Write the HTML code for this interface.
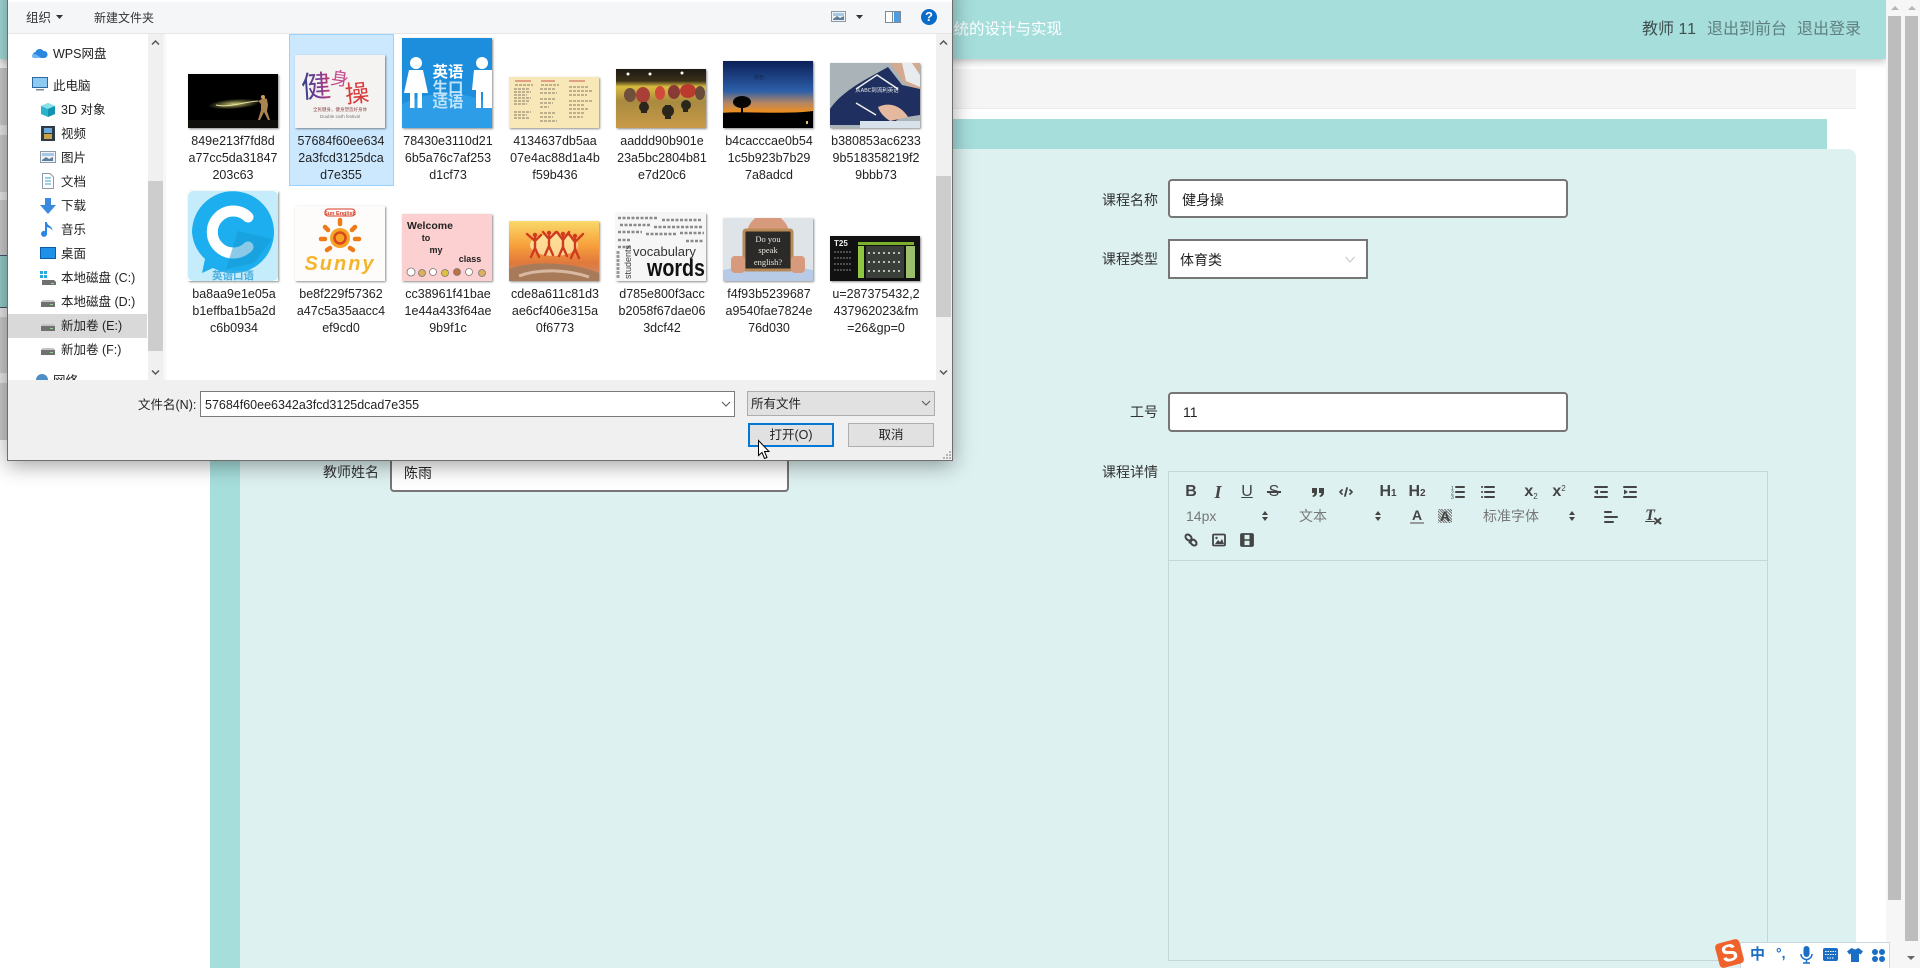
<!DOCTYPE html>
<html lang="zh">
<head>
<meta charset="utf-8">
<title>文件选择</title>
<style>
html,body{margin:0;padding:0;width:1920px;height:968px;overflow:hidden;background:#fff}
body{position:relative;font-family:"Liberation Sans","Noto Sans CJK SC",sans-serif;color:#333}
.a{position:absolute}
.l{position:absolute;white-space:nowrap}
.inp{position:absolute;box-sizing:border-box;background:#fff;border:2px solid #767676;border-radius:4px;font-size:14px;color:#222;white-space:nowrap}
.lab{position:absolute;font-size:14px;color:#333;white-space:nowrap;line-height:20px;width:56px;text-align:right}
.nav{position:absolute;font-size:12.5px;color:#222;line-height:18px;white-space:nowrap}
.cap{position:absolute;width:106px;text-align:center;font-size:12.5px;line-height:17px;color:#222;white-space:nowrap}
.t{position:absolute;box-shadow:1px 1px 2px rgba(0,0,0,.45);display:block;overflow:hidden}
.ql{position:absolute;color:#444;font-weight:700;font-size:15px;line-height:18px;text-align:center;white-space:nowrap}
svg{display:block}
.ic{position:absolute;overflow:visible}
.s{fill:none;stroke:#444;stroke-width:2;stroke-linecap:round;stroke-linejoin:round}
.f{fill:#444;stroke:none}
</style>
</head>
<body>

<!-- PAGE BEHIND -->
<div class="a" style="left:0;top:68px;width:7px;height:57px;background:#cdcdcd"></div>
<div class="a" style="left:0;top:125px;width:7px;height:10px;background:#e9e9e9"></div>
<div class="a" style="left:0;top:135px;width:7px;height:57px;background:#cdcdcd"></div>
<div class="a" style="left:0;top:192px;width:7px;height:8px;background:#e9e9e9"></div>
<div class="a" style="left:0;top:200px;width:7px;height:55px;background:#cdcdcd"></div>
<div class="a" style="left:0;top:255px;width:7px;height:53px;background:#96cdca;border-top:1px solid #456;border-bottom:1px solid #456;box-sizing:border-box"></div>
<div class="a" style="left:0;top:308px;width:7px;height:9px;background:#e9e9e9"></div>
<div class="a" style="left:0;top:317px;width:7px;height:56px;background:#cdcdcd"></div>
<div class="a" style="left:0;top:373px;width:7px;height:10px;background:#e9e9e9"></div>
<div class="a" style="left:0;top:383px;width:7px;height:57px;background:#cdcdcd"></div>

<div class="a" style="left:210px;top:69px;width:1646px;height:39px;background:#f6f5f6;border-bottom:1px solid #ececec"></div>
<div class="a" style="left:240px;top:119px;width:1587px;height:30px;background:#a6dedc"></div>
<div class="a" style="left:210px;top:149px;width:30px;height:819px;background:#a6dedc"></div>
<div class="a" style="left:240px;top:149px;width:1616px;height:819px;background:#ddf1f0;border-radius:0 8px 0 0"></div>

<!-- Header -->
<div class="a" style="left:0;top:0;width:1886px;height:59px;background:#a6dedc;box-shadow:0 2px 8px rgba(0,0,0,.28)"></div>
<div class="l" style="right:858px;top:19px;font-size:15.5px;line-height:22px;color:#fff">系统的设计与实现</div>
<div class="l" style="left:1642px;top:18px;font-size:16px;line-height:24px;color:#3f4f4f">教师 <span style="letter-spacing:1px">11</span></div>
<div class="l" style="left:1707px;top:18px;font-size:16px;line-height:24px;color:#5f7f7f">退出到前台</div>
<div class="l" style="left:1797px;top:18px;font-size:16px;line-height:24px;color:#5f7f7f">退出登录</div>

<!-- Scrollbars -->
<div class="a" style="left:1886px;top:0;width:34px;height:968px;background:#f6f6f6"></div>
<div class="a" style="left:1888px;top:16px;width:13px;height:884px;background:#bdbdbd"></div>
<div class="a" style="left:1905px;top:16px;width:13px;height:925px;background:#bdbdbd"></div>
<svg class="ic" style="left:1890px;top:5px" width="10" height="6"><path d="M1 5H9L5 1Z" fill="#b5b5b5"/></svg>
<svg class="ic" style="left:1907px;top:5px" width="10" height="6"><path d="M1 5H9L5 1Z" fill="#b5b5b5"/></svg>
<svg class="ic" style="left:1906px;top:955px" width="10" height="6"><path d="M1 1H9L5 5Z" fill="#666"/></svg>

<!-- Form -->
<div class="lab" style="left:1102px;top:190px">课程名称</div>
<div class="inp" style="left:1168px;top:179px;width:400px;height:39px;line-height:38px;padding-left:12px">健身操</div>
<div class="lab" style="left:1102px;top:249px">课程类型</div>
<div class="inp" style="left:1168px;top:239px;width:200px;height:40px;line-height:38px;padding-left:10px;border-radius:0">体育类</div>
<svg class="ic" style="left:1344px;top:255px" width="12" height="10"><path d="M1.500 2L6 7L10.500 2" fill="none" stroke="#c4c4c4" stroke-width="1"/></svg>
<div class="lab" style="left:1102px;top:402px">工号</div>
<div class="inp" style="left:1168px;top:392px;width:400px;height:40px;line-height:36px;padding-left:13px">11</div>
<div class="lab" style="left:1102px;top:462px">课程详情</div>
<div class="lab" style="left:323px;top:462px">教师姓名</div>
<div class="inp" style="left:390px;top:452px;width:399px;height:40px;line-height:38px;padding-left:12px">陈雨</div>

<!-- Editor -->
<div class="a" style="left:1168px;top:471px;width:600px;height:490px;box-sizing:border-box;border:1px solid #c4d6d6"></div>
<div class="a" style="left:1168px;top:560px;width:600px;height:1px;background:#c4d6d6"></div>

<div class="ql" style="left:1179px;top:483px;width:24px;font-size:16px">B</div>
<div class="ql" style="left:1206px;top:483px;width:24px;font-family:'Liberation Serif',serif;font-style:italic;font-weight:700;font-size:18px">I</div>
<div class="ql" style="left:1235px;top:483px;width:24px;font-weight:400;font-size:16px;text-decoration:underline">U</div>
<div class="ql" style="left:1262px;top:483px;width:24px;font-weight:400;font-size:16px">S</div>
<div class="a" style="left:1267px;top:491px;width:14px;height:2px;background:#444"></div>
<svg class="ic" style="left:1309px;top:483px" width="18" height="18"><path class="f" d="M3 5h5v4.500C8 12 6.500 13.500 4 14l-.7-1.200C4.700 12.300 5.300 11.300 5.300 10H3zM10 5h5v4.500c0 2.500-1.500 4-4 4.500l-.7-1.200c1.400-.5 2-1.500 2-2.800H10z"/></svg>
<svg class="ic" style="left:1337px;top:483px" width="18" height="18"><path class="s" d="M5 7L3 9L5 11M13 7L15 9L13 11M10 5L8 13" style="stroke-width:1.800"/></svg>
<div class="ql" style="left:1375px;top:483px;width:26px;font-size:16px;font-weight:700">H<span style="font-size:10px;font-weight:700">1</span></div>
<div class="ql" style="left:1404px;top:483px;width:26px;font-size:16px;font-weight:700">H<span style="font-size:10px;font-weight:700">2</span></div>
<svg class="ic" style="left:1449px;top:483px" width="18" height="18"><path class="s" d="M7 4H15M7 9H15M7 14H15"/><text x="2" y="7" font-size="5" fill="#444" font-family="Liberation Sans">1</text><text x="2" y="11.500" font-size="5" fill="#444" font-family="Liberation Sans">2</text><text x="2" y="16" font-size="5" fill="#444" font-family="Liberation Sans">3</text></svg>
<svg class="ic" style="left:1479px;top:483px" width="18" height="18"><path class="s" d="M6 4H15M6 9H15M6 14H15M3 4H3.100M3 9H3.100M3 14H3.100"/></svg>
<div class="ql" style="left:1518px;top:483px;width:26px;font-size:16px">x<span style="font-size:8px;font-weight:400;position:relative;top:3px">2</span></div>
<div class="ql" style="left:1546px;top:483px;width:26px;font-size:16px">x<span style="font-size:8px;font-weight:400;position:relative;top:-5px">2</span></div>
<svg class="ic" style="left:1592px;top:483px" width="18" height="18"><path class="s" d="M3 4H15M3 14H15M9 9H15"/><path class="f" d="M2 9L6 6.500V11.500Z"/></svg>
<svg class="ic" style="left:1621px;top:483px" width="18" height="18"><path class="s" d="M3 4H15M3 14H15M9 9H15"/><path class="f" d="M7 9L3 6.500V11.500Z"/></svg>

<div class="l" style="left:1186px;top:507px;font-size:14px;line-height:18px;color:#777">14px</div>
<svg class="ic" style="left:1261px;top:510px" width="8" height="12"><path class="f" d="M1 5L4 1L7 5ZM1 7L4 11L7 7Z"/></svg>
<div class="l" style="left:1299px;top:507px;font-size:14px;line-height:18px;color:#777">文本</div>
<svg class="ic" style="left:1374px;top:510px" width="8" height="12"><path class="f" d="M1 5L4 1L7 5ZM1 7L4 11L7 7Z"/></svg>
<div class="ql" style="left:1405px;top:506px;width:24px;font-size:14px">A</div>
<div class="a" style="left:1410px;top:522px;width:14px;height:2px;background:#999"></div>
<div class="ql" style="left:1433px;top:507px;width:24px;font-size:14px;background:repeating-linear-gradient(45deg,#777 0 1px,transparent 1px 2px) center/14px 14px no-repeat">A</div>
<div class="l" style="left:1483px;top:507px;font-size:14px;line-height:18px;color:#777">标准字体</div>
<svg class="ic" style="left:1568px;top:510px" width="8" height="12"><path class="f" d="M1 5L4 1L7 5ZM1 7L4 11L7 7Z"/></svg>
<svg class="ic" style="left:1602px;top:508px" width="18" height="18"><path class="s" d="M3 4H9M3 9H15M3 14H11"/></svg>
<div class="ql" style="left:1640px;top:507px;width:20px;font-family:'Liberation Serif',serif;font-style:italic;font-weight:700;font-size:16px;text-decoration:underline;">T</div>
<svg class="ic" style="left:1654px;top:517px" width="8" height="8"><path class="s" d="M1 1.500L6.500 6.500M6.500 1.500L1 6.500"/></svg>

<svg class="ic" style="left:1182px;top:531px" width="18" height="18"><path class="s" d="M7.500 11.500L10.500 8.500"/><ellipse class="s" cx="6.500" cy="6.500" rx="3.500" ry="2.500" transform="rotate(45 6.500 6.500)"/><ellipse class="s" cx="11.500" cy="11.500" rx="3.500" ry="2.500" transform="rotate(45 11.500 11.500)"/></svg>
<svg class="ic" style="left:1210px;top:531px" width="18" height="18"><rect class="s" x="3" y="3.500" width="12" height="11" rx="1" style="stroke-width:1.800"/><path class="f" d="M5 13L8 9L10 11L12 8L14 13Z"/><circle class="f" cx="6.500" cy="7" r="1.200"/></svg>
<svg class="ic" style="left:1238px;top:531px" width="18" height="18"><rect class="s" x="3" y="3" width="12" height="12" rx="1" style="stroke-width:1.800"/><rect class="f" x="3" y="3" width="3.500" height="12"/><rect class="f" x="11.500" y="3" width="3.500" height="12"/><path class="s" d="M6.500 9H11.500" style="stroke-width:1.500"/></svg>

<!-- DIALOG -->
<div class="a" style="left:7px;top:-20px;width:946px;height:481px;box-sizing:border-box;background:#f0f0f0;border:1px solid #6e6e6e;box-shadow:0 4px 20px rgba(0,0,0,.38)"></div>
<div class="a" style="left:8px;top:2px;width:944px;height:31px;background:#f5f6f7;border-bottom:1px solid #e6e6e6"></div>
<div class="a" style="left:8px;top:0;width:944px;height:2px;background:#fff"></div>
<div class="l" style="left:26px;top:10px;font-size:12.5px;line-height:17px;color:#333">组织</div>
<svg class="ic" style="left:55px;top:14px" width="9" height="6"><path d="M1 1H8L4.500 5Z" fill="#333"/></svg>
<div class="l" style="left:94px;top:10px;font-size:12px;line-height:17px;color:#333">新建文件夹</div>
<svg class="ic" style="left:831px;top:11px" width="16" height="12"><rect x=".5" y=".5" width="14" height="10" fill="#eef2f6" stroke="#8c9aa8"/><path d="M2 8L6 5L9 7L13 5V9H2Z" fill="#5d7f99"/><rect x="2" y="2" width="11" height="3" fill="#a9c7df"/></svg>
<svg class="ic" style="left:855px;top:14px" width="9" height="6"><path d="M1 1H8L4.500 5Z" fill="#333"/></svg>
<svg class="ic" style="left:885px;top:11px" width="17" height="13"><rect x=".5" y=".5" width="15" height="11" fill="#fff" stroke="#7d8b97"/><rect x="9" y="1" width="6" height="10" fill="#4c9ee0"/><rect x="7" y="1" width="1" height="10" fill="#7d8b97"/></svg>
<div class="a" style="left:921px;top:9px;width:16px;height:16px;border-radius:50%;background:#0a6cc9;color:#fff;font-size:13px;font-weight:700;line-height:16px;text-align:center">?</div>

<!-- nav pane -->
<div class="a" style="left:8px;top:34px;width:140px;height:346px;background:#fff;overflow:hidden"></div>
<div class="a" style="left:148px;top:34px;width:15px;height:346px;background:#f0f0f0"></div>
<div class="a" style="left:148px;top:181px;width:15px;height:170px;background:#cdcdcd"></div>
<svg class="ic" style="left:151px;top:39px" width="9" height="7"><path d="M1 5.500L4.500 2L8 5.500" fill="none" stroke="#555" stroke-width="1.500"/></svg>
<svg class="ic" style="left:151px;top:369px" width="9" height="7"><path d="M1 1.500L4.500 5L8 1.500" fill="none" stroke="#555" stroke-width="1.500"/></svg>
<div class="a" style="left:163px;top:34px;width:3px;height:346px;background:#f7f7f7"></div>
<div class="a" style="left:166px;top:34px;width:770px;height:346px;background:#fff"></div>
<div class="a" style="left:936px;top:34px;width:16px;height:346px;background:#f0f0f0"></div>
<div class="a" style="left:936px;top:176px;width:15px;height:141px;background:#cdcdcd"></div>
<svg class="ic" style="left:939px;top:39px" width="9" height="7"><path d="M1 5.500L4.500 2L8 5.500" fill="none" stroke="#555" stroke-width="1.500"/></svg>
<svg class="ic" style="left:939px;top:369px" width="9" height="7"><path d="M1 1.500L4.500 5L8 1.500" fill="none" stroke="#555" stroke-width="1.500"/></svg>

<div class="a" style="left:8px;top:314px;width:139px;height:24px;background:#d9d9d9"></div>

<svg class="ic" style="left:32px;top:47px" width="16" height="12"><path d="M4 11a3 3 0 0 1-.5-6A4.500 4.500 0 0 1 11.500 4 3.500 3.500 0 0 1 12.500 11Z" fill="#2b86e0"/><path d="M2 11a2 2 0 0 1 0-4C4 7 7 9 9 11Z" fill="#6cb4f2"/></svg>
<div class="nav" style="left:53px;top:45px">WPS网盘</div>
<svg class="ic" style="left:32px;top:77px" width="16" height="15"><rect x=".5" y=".5" width="15" height="10" fill="#8ec9f3" stroke="#2b6a9e"/><rect x="4" y="12" width="8" height="1.500" fill="#7a8894"/></svg>
<div class="nav" style="left:53px;top:77px">此电脑</div>
<svg class="ic" style="left:40px;top:102px" width="16" height="16"><path d="M8 1L15 4V12L8 15L1 12V4Z" fill="#2ab4cc"/><path d="M1 4L8 7L15 4L8 1Z" fill="#86e0ea"/><path d="M8 7V15L15 12V4Z" fill="#1592b0"/></svg>
<div class="nav" style="left:61px;top:101px">3D 对象</div>
<svg class="ic" style="left:41px;top:126px" width="14" height="15"><rect width="14" height="15" fill="#2e3a46"/><rect x="3" y="2" width="8" height="5" fill="#6ca8d8"/><rect x="3" y="8" width="8" height="5" fill="#c9a24c"/></svg>
<div class="nav" style="left:61px;top:125px">视频</div>
<svg class="ic" style="left:40px;top:151px" width="16" height="13"><rect x=".5" y=".5" width="15" height="11" fill="#eef2f6" stroke="#8c9aa8"/><path d="M2 9L6 6L9 8L13 6V10H2Z" fill="#5d7f99"/><rect x="2" y="2" width="12" height="3" fill="#a9c7df"/></svg>
<div class="nav" style="left:61px;top:149px">图片</div>
<svg class="ic" style="left:42px;top:173px" width="12" height="16"><path d="M.5 .5H8L11.500 4V15.500H.5Z" fill="#fff" stroke="#8c9aa8"/><path d="M3 5H9M3 8H9M3 11H9" stroke="#3aa0c8"/></svg>
<div class="nav" style="left:61px;top:173px">文档</div>
<svg class="ic" style="left:40px;top:198px" width="16" height="16"><path d="M5 0H11V7H16L8 16L0 7H5Z" fill="#3a8ae0"/></svg>
<div class="nav" style="left:61px;top:197px">下载</div>
<svg class="ic" style="left:42px;top:222px" width="12" height="16"><path d="M5 0V11.500A3 3 0 1 1 3 9V0H5C5 4 11 4 10.500 9 9.500 6 7 6 5 5" fill="#2b86e0"/></svg>
<div class="nav" style="left:61px;top:221px">音乐</div>
<svg class="ic" style="left:40px;top:247px" width="16" height="13"><rect x=".5" y=".5" width="15" height="11" fill="#1e90e8" stroke="#0b5fa8"/></svg>
<div class="nav" style="left:61px;top:245px">桌面</div>
<svg class="ic" style="left:40px;top:271px" width="16" height="14"><rect x="0" y="0" width="3" height="3" fill="#29a8e0"/><rect x="4" y="0" width="3" height="3" fill="#29a8e0"/><rect x="0" y="4" width="3" height="3" fill="#29a8e0"/><rect x="4" y="4" width="3" height="3" fill="#29a8e0"/><path d="M2 9H14L16 11V14H2Z" fill="#707070"/><rect x="11" y="12" width="3" height="1" fill="#7fe07f"/></svg>
<div class="nav" style="left:61px;top:269px">本地磁盘 (C:)</div>
<svg class="ic" style="left:41px;top:300px" width="14" height="7"><path d="M2 0H12L14 2V7H0V2Z" fill="#707070"/><path d="M2 0H12L14 2H0Z" fill="#c4c4c4"/><rect x="9" y="4" width="3" height="1" fill="#7fe07f"/></svg>
<div class="nav" style="left:61px;top:293px">本地磁盘 (D:)</div>
<svg class="ic" style="left:41px;top:324px" width="14" height="7"><path d="M2 0H12L14 2V7H0V2Z" fill="#707070"/><path d="M2 0H12L14 2H0Z" fill="#c4c4c4"/><rect x="9" y="4" width="3" height="1" fill="#7fe07f"/></svg>
<div class="nav" style="left:61px;top:317px">新加卷 (E:)</div>
<svg class="ic" style="left:41px;top:348px" width="14" height="7"><path d="M2 0H12L14 2V7H0V2Z" fill="#707070"/><path d="M2 0H12L14 2H0Z" fill="#c4c4c4"/><rect x="9" y="4" width="3" height="1" fill="#7fe07f"/></svg>
<div class="nav" style="left:61px;top:341px">新加卷 (F:)</div>
<div class="a" style="left:8px;top:370px;width:140px;height:10px;overflow:hidden">
  <div class="a" style="left:28px;top:4px;width:12px;height:12px;border-radius:50%;background:#4d8ec6"></div>
  <div class="nav" style="left:45px;top:2px">网络</div>
</div>

<!-- selection -->
<div class="a" style="left:289px;top:34px;width:105px;height:152px;box-sizing:border-box;background:#cce8ff;border:1px solid #99d1ff"></div>

<!-- thumbnails row 1 -->
<svg class="t" style="left:188px;top:74px" width="90" height="54" viewBox="0 0 90 54"><defs><radialGradient id="g1" cx=".5" cy=".5" r=".5"><stop offset="0" stop-color="#d8d27a" stop-opacity=".9"/><stop offset="1" stop-color="#d8d27a" stop-opacity="0"/></radialGradient></defs><rect width="90" height="54" fill="#000"/><ellipse cx="46" cy="30" rx="26" ry="5" fill="url(#g1)" transform="rotate(-4 46 30)"/><path d="M28 31C40 34 55 28 70 27" stroke="#e6e2a0" fill="none"/><path d="M70 27l6-3 3 1 1 6-1 6 3 9-2 0-4-8-4 8-2 0 3-10 0-6Z" fill="#a98450"/><circle cx="75" cy="23" r="2" fill="#c9a060"/><rect y="46" width="90" height="8" fill="#100f0c"/></svg>

<svg class="t" style="left:295px;top:55px" width="90" height="73" viewBox="0 0 90 73"><defs><linearGradient id="g2" x1="0" x2="1"><stop offset="0" stop-color="#2b3e86"/><stop offset=".6" stop-color="#7c3d96"/><stop offset="1" stop-color="#c83a6a"/></linearGradient></defs><rect width="90" height="73" fill="#f5f3f2"/><g font-family="Noto Sans CJK SC,sans-serif"><text x="6" y="42" font-size="30" fill="url(#g2)" transform="rotate(-4 20 30)">健</text><text x="36" y="30" font-size="18" fill="#c44a8a" transform="rotate(8 45 22)">身</text><text x="50" y="47" font-size="24" fill="#d83a3a" transform="rotate(-6 60 38)">操</text><text x="45" y="56" font-size="4.500" fill="#844" text-anchor="middle">全民健身，健身塑造好身体</text></g><text x="45" y="63" font-size="4.500" fill="#777" text-anchor="middle" font-family="Liberation Sans">Double sixth festival</text></svg>

<svg class="t" style="left:402px;top:38px" width="90" height="90" viewBox="0 0 90 90"><rect width="90" height="90" fill="#1d8edb"/><path d="M0 90V66C30 52 60 52 90 66V90Z" fill="#2c9de6"/><g fill="#fff"><circle cx="14" cy="25" r="6"/><path d="M7 32H21L26 55H20V70H15.500V55H12.500V70H8V55H2Z"/><circle cx="80" cy="25" r="6"/><path d="M72 32H90V70H81V54H79V70H74V52H70Z"/></g><text x="46" y="39" font-size="15.500" fill="#fff" font-weight="700" text-anchor="middle" font-family="Noto Sans CJK SC,sans-serif">英语</text><text x="46" y="55" font-size="15.500" fill="#bfe3fb" font-weight="700" text-anchor="middle" font-family="Noto Sans CJK SC,sans-serif">生口</text><text x="46" y="69" font-size="15.500" fill="#bfe3fb" font-weight="700" text-anchor="middle" font-family="Noto Sans CJK SC,sans-serif">适语</text></svg>

<svg class="t" style="left:509px;top:77px" width="90" height="51" viewBox="0 0 90 51"><rect width="90" height="51" fill="#f8e8b8"/><g stroke="#8d7f66" stroke-width="1.200" stroke-dasharray="3 1" opacity=".85"><path d="M6 8H24M5 12H20M5 15H22M5 18H18M5 21H22M5 24H20M5 27H18M5 35H22M5 38H18M5 41H20"/><path d="M32 8H50M31 12H46M31 16H48M31 22H46M31 26H44M31 30H40M31 36H46M31 40H44M31 44H48"/><path d="M60 10H80M60 14H84M60 18H78M60 24H84M60 28H76M60 32H80M60 36H76M60 40H74"/></g><path d="M6 4H22M32 4H46M60 4H76" stroke="#c65a4a"/></svg>

<svg class="t" style="left:616px;top:69px" width="90" height="59" viewBox="0 0 90 59"><defs><linearGradient id="g5" x1="0" y1="0" x2="0" y2="1"><stop offset="0" stop-color="#1e1a14"/><stop offset=".2" stop-color="#3a3018"/><stop offset=".3" stop-color="#d8bc40"/><stop offset=".55" stop-color="#a88a40"/><stop offset="1" stop-color="#c99a48"/></linearGradient></defs><rect width="90" height="59" fill="url(#g5)"/><g fill="#fff"><circle cx="12" cy="5" r="1.500"/><circle cx="34" cy="5" r="1.500"/><circle cx="66" cy="4" r="1.500"/></g><g><ellipse cx="14" cy="26" rx="6" ry="7" fill="#70503a"/><ellipse cx="27" cy="26" rx="7" ry="8" fill="#a84038"/><ellipse cx="44" cy="24" rx="5" ry="7" fill="#d14a3a"/><ellipse cx="58" cy="23" rx="6" ry="7" fill="#8a3a34"/><ellipse cx="72" cy="22" rx="8" ry="7" fill="#bb3a30"/><ellipse cx="84" cy="24" rx="5" ry="7" fill="#6a4a3a"/></g><g fill="#2a261c"><circle cx="28" cy="38" r="5"/><circle cx="52" cy="42" r="6"/><circle cx="70" cy="36" r="5"/><rect x="25" y="33" width="6" height="11"/><rect x="49" y="36" width="6" height="14"/><rect x="67" y="32" width="5" height="11"/></g></svg>

<svg class="t" style="left:723px;top:61px" width="90" height="67" viewBox="0 0 90 67"><defs><linearGradient id="g6" x1="0" y1="0" x2="0" y2="1"><stop offset="0" stop-color="#0c1f58"/><stop offset=".45" stop-color="#2c5fa8"/><stop offset=".62" stop-color="#b08566"/><stop offset=".76" stop-color="#ee8f22"/><stop offset=".8" stop-color="#000"/><stop offset="1" stop-color="#000"/></linearGradient></defs><rect width="90" height="67" fill="url(#g6)"/><path d="M0 52C20 50 60 54 90 50V67H0Z" fill="#000"/><path d="M19 54V42" stroke="#000" stroke-width="2"/><ellipse cx="19" cy="41" rx="9" ry="6" fill="#060606"/><text x="36" y="18" font-size="5" fill="#14284f" text-anchor="middle" font-family="Noto Sans CJK SC,sans-serif">夜色</text><rect x="83" y="60" width="2" height="3" fill="#d9c060"/></svg>

<svg class="t" style="left:830px;top:63px" width="90" height="65" viewBox="0 0 90 65"><rect width="90" height="65" fill="#a9b3b8"/><path d="M60 0H90V28L74 20Z" fill="#d3a98f"/><path d="M0 62V46C8 34 22 24 40 14L58 4L72 22L90 26V52L70 55 60 62Z" fill="#1f3060"/><path d="M72 0L82 0L90 12V24L76 18Z" fill="#e8ecef"/><path d="M26 26L47 12L68 26" fill="none" stroke="#f0f0f0" stroke-width="1.500"/><text x="47" y="29" font-size="5.500" fill="#f0f0f0" text-anchor="middle" font-family="Noto Sans CJK SC,sans-serif">从ABC到流利英语</text><path d="M26 40L46 52" stroke="#f0f0f0" stroke-width="1.500"/><path d="M48 44C60 38 72 44 78 54L60 58C54 54 50 50 48 44Z" fill="#e5b9a0"/><rect x="30" y="58" width="60" height="7" fill="#d8e2ea"/></svg>

<!-- thumbnails row 2 -->
<svg class="t" style="left:188px;top:191px" width="90" height="90" viewBox="0 0 90 90"><rect width="90" height="90" rx="5" fill="#c5ecfb"/><path d="M4 41a41 41 0 1 1 21 36L14 82 17 68A41 41 0 0 1 4 41Z" fill="#1caeee"/><path d="M60 26A21 21 0 1 0 60 56" fill="none" stroke="#fff" stroke-width="11" stroke-linecap="round"/><path d="M50 40l34 8-18 24-28 6z" fill="#1696d2" opacity=".5"/><text x="45" y="88" font-size="10.500" fill="#4aaee0" text-anchor="middle" font-weight="700" font-family="Noto Sans CJK SC,sans-serif">英语口语</text></svg>

<svg class="t" style="left:295px;top:206px" width="90" height="75" viewBox="0 0 90 75"><rect width="90" height="75" fill="#fdfcfb"/><circle cx="45" cy="32" r="10" fill="#f6a326"/><circle cx="45" cy="32" r="5.500" fill="none" stroke="#d9481c" stroke-width="2.500"/><g stroke="#ee7a18" stroke-width="4.500" stroke-linecap="round"><path d="M45 14V18M30 21L33 24M60 21L57 24M26 33H30M60 33H64M32 44L35 42M58 44L55 42"/></g><rect x="30" y="3" width="30" height="7" rx="3" fill="none" stroke="#d83a20"/><text x="45" y="9" font-size="5.500" fill="#d83a20" text-anchor="middle" font-family="Liberation Sans" font-weight="700">Sun English</text><text x="45" y="64" font-size="20" fill="#f4b52c" text-anchor="middle" font-style="italic" font-weight="700" font-family="Liberation Sans" letter-spacing="2">Sunny</text></svg>

<svg class="t" style="left:402px;top:214px" width="90" height="67" viewBox="0 0 90 67"><rect width="90" height="67" fill="#fcd0d0"/><text x="5" y="15" font-size="10.500" fill="#222" font-weight="700" font-family="Liberation Sans">Welcome</text><text x="24" y="27" font-size="9" fill="#222" font-weight="700" text-anchor="middle" font-family="Liberation Sans">to</text><text x="34" y="39" font-size="9" fill="#222" text-anchor="middle" font-weight="700" font-family="Liberation Sans">my</text><text x="68" y="48" font-size="9" fill="#222" text-anchor="middle" font-weight="700" font-family="Liberation Sans">class</text><g stroke="#777" stroke-width=".8"><circle cx="9" cy="58" r="4" fill="#fff"/><circle cx="20" cy="59" r="3.500" fill="#d8b060"/><circle cx="31" cy="58" r="3.500" fill="#fff"/><circle cx="43" cy="59" r="3.500" fill="#e0c040"/><circle cx="55" cy="58" r="3.500" fill="#c07040"/><circle cx="67" cy="58" r="3.500" fill="#fff"/><circle cx="80" cy="59" r="3.500" fill="#d8b060"/></g></svg>

<svg class="t" style="left:509px;top:221px" width="90" height="60" viewBox="0 0 90 60"><defs><linearGradient id="g9" x1="0" y1="0" x2="0" y2="1"><stop offset="0" stop-color="#f9d96a"/><stop offset=".4" stop-color="#f8a13c"/><stop offset=".7" stop-color="#e0783c"/><stop offset="1" stop-color="#c49272"/></linearGradient></defs><rect width="90" height="60" fill="url(#g9)"/><ellipse cx="45" cy="24" rx="24" ry="11" fill="#ffedb0" opacity=".75"/><path d="M0 60V48C20 40 60 40 90 52V60Z" fill="#a77b5a"/><path d="M10 55C30 47 60 49 80 56" stroke="#d8b8a0" stroke-width="3" fill="none"/><g fill="#d03a20"><circle cx="26" cy="14" r="2.200"/><circle cx="40" cy="12" r="2.200"/><circle cx="54" cy="13" r="2.200"/><circle cx="66" cy="15" r="2.200"/></g><g stroke="#d03a20" stroke-width="2.400" stroke-linecap="round" fill="none"><path d="M26 17V27M26 20L18 13M26 20L32 14M26 27L22 36M26 27L30 36"/><path d="M40 15V25M40 18L34 11M40 18L47 11M40 25L36 34M40 25L44 34"/><path d="M54 16V26M54 19L48 11M54 19L60 11M54 26L50 35M54 26L58 35"/><path d="M66 18V28M66 21L60 13M66 21L74 13M66 28L62 37M66 28L70 37"/></g></svg>

<svg class="t" style="left:616px;top:213px" width="90" height="68" viewBox="0 0 90 68"><rect width="90" height="68" fill="#f6f6f6"/><g stroke="#8a8a8a" stroke-width="2.500" stroke-dasharray="3 1.500"><path d="M2 5H42M46 7H86M4 12H34M38 14H86M2 19H26M30 21H60M64 20H88M2 27H14M70 28H88M2 34H14"/></g><text x="17" y="43" font-size="13" fill="#333" font-family="Liberation Sans">vocabulary</text><text x="31" y="63" font-size="24" fill="#111" font-weight="700" font-family="Liberation Sans" textLength="58" lengthAdjust="spacingAndGlyphs">words</text><text x="0" y="0" font-size="9" fill="#444" font-family="Liberation Sans" transform="translate(15 66) rotate(-90)">students</text><path d="M2 38V66" stroke="#999" stroke-width="3" stroke-dasharray="3 1"/></svg>

<svg class="t" style="left:723px;top:218px" width="90" height="63" viewBox="0 0 90 63"><rect width="90" height="63" fill="#dfe4e8"/><ellipse cx="45" cy="16" rx="21" ry="20" fill="#d89a7c"/><path d="M0 63V52L30 46H60L90 52V63Z" fill="#b7cbe6"/><rect x="21" y="12" width="48" height="40" rx="2" fill="#2b2a28" stroke="#b88a58" stroke-width="3"/><text x="45" y="24" font-size="8.500" fill="#e5e5dc" text-anchor="middle" font-family="Liberation Serif">Do you</text><text x="45" y="35" font-size="8.500" fill="#e5e5dc" text-anchor="middle" font-family="Liberation Serif">speak</text><text x="45" y="47" font-size="8.500" fill="#e5e5dc" text-anchor="middle" font-family="Liberation Serif">english?</text><rect x="8" y="38" width="14" height="17" rx="4" fill="#d89a7c"/><rect x="68" y="38" width="14" height="17" rx="4" fill="#d89a7c"/></svg>

<svg class="t" style="left:830px;top:236px" width="90" height="45" viewBox="0 0 90 45"><rect width="90" height="45" fill="#111"/><text x="4" y="10" font-size="8" fill="#eee" font-weight="700" font-family="Liberation Sans">T25</text><rect x="28" y="6" width="56" height="3" fill="#7ab02c"/><rect x="28" y="10" width="6" height="32" fill="#8ec63f"/><rect x="76" y="10" width="9" height="32" fill="#9bbf6a"/><rect x="36" y="10" width="38" height="32" fill="#3a3f3a"/><g fill="#e8e8e8"><circle cx="39" cy="17" r="1"/><circle cx="44" cy="17" r="1"/><circle cx="49" cy="17" r="1"/><circle cx="54" cy="17" r="1"/><circle cx="59" cy="17" r="1"/><circle cx="64" cy="17" r="1"/><circle cx="69" cy="17" r="1"/><circle cx="39" cy="26" r="1"/><circle cx="44" cy="26" r="1"/><circle cx="49" cy="26" r="1"/><circle cx="54" cy="26" r="1"/><circle cx="59" cy="26" r="1"/><circle cx="64" cy="26" r="1"/><circle cx="69" cy="26" r="1"/><circle cx="39" cy="35" r="1"/><circle cx="44" cy="35" r="1"/><circle cx="49" cy="35" r="1"/><circle cx="54" cy="35" r="1"/><circle cx="59" cy="35" r="1"/><circle cx="64" cy="35" r="1"/><circle cx="69" cy="35" r="1"/></g><path d="M4 16H22M4 22H22M4 28H22M4 34H22" stroke="#888" stroke-dasharray="2 1"/></svg>

<!-- captions row 1 -->
<div class="cap" style="left:180px;top:133px">849e213f7fd8d<br>a77cc5da31847<br>203c63</div>
<div class="cap" style="left:288px;top:133px">57684f60ee634<br>2a3fcd3125dca<br>d7e355</div>
<div class="cap" style="left:395px;top:133px">78430e3110d21<br>6b5a76c7af253<br>d1cf73</div>
<div class="cap" style="left:502px;top:133px">4134637db5aa<br>07e4ac88d1a4b<br>f59b436</div>
<div class="cap" style="left:609px;top:133px">aaddd90b901e<br>23a5bc2804b81<br>e7d20c6</div>
<div class="cap" style="left:716px;top:133px">b4cacccae0b54<br>1c5b923b7b29<br>7a8adcd</div>
<div class="cap" style="left:823px;top:133px">b380853ac6233<br>9b518358219f2<br>9bbb73</div>
<!-- captions row 2 -->
<div class="cap" style="left:181px;top:286px">ba8aa9e1e05a<br>b1effba1b5a2d<br>c6b0934</div>
<div class="cap" style="left:288px;top:286px">be8f229f57362<br>a47c5a35aacc4<br>ef9cd0</div>
<div class="cap" style="left:395px;top:286px">cc38961f41bae<br>1e44a433f64ae<br>9b9f1c</div>
<div class="cap" style="left:502px;top:286px">cde8a611c81d3<br>ae6cf406e315a<br>0f6773</div>
<div class="cap" style="left:609px;top:286px">d785e800f3acc<br>b2058f67dae06<br>3dcf42</div>
<div class="cap" style="left:716px;top:286px">f4f93b5239687<br>a9540fae7824e<br>76d030</div>
<div class="cap" style="left:823px;top:286px">u=287375432,2<br>437962023&amp;fm<br>=26&amp;gp=0</div>

<!-- dialog bottom -->
<div class="l" style="left:138px;top:396px;font-size:12.5px;line-height:18px;color:#222">文件名(N):</div>
<div class="a" style="left:200px;top:391px;width:535px;height:26px;box-sizing:border-box;background:#fff;border:1px solid #7a7a7a;font-size:12.5px;line-height:26px;padding-left:4px;color:#222;white-space:nowrap">57684f60ee6342a3fcd3125dcad7e355</div>
<svg class="ic" style="left:721px;top:401px" width="10" height="7"><path d="M1 1L5 5L9 1" fill="none" stroke="#555"/></svg>
<div class="a" style="left:747px;top:391px;width:188px;height:25px;box-sizing:border-box;background:#e1e1e1;border:1px solid #adadad;font-size:12.5px;line-height:25px;padding-left:3px;color:#222">所有文件</div>
<svg class="ic" style="left:921px;top:400px" width="10" height="7"><path d="M1 1L5 5L9 1" fill="none" stroke="#555"/></svg>
<div class="a" style="left:748px;top:423px;width:86px;height:24px;box-sizing:border-box;background:#e1e1e1;border:2px solid #0078d7;font-size:12.5px;line-height:20px;text-align:center;color:#222">打开(O)</div>
<div class="a" style="left:848px;top:423px;width:86px;height:24px;box-sizing:border-box;background:#e1e1e1;border:1px solid #adadad;font-size:12.5px;line-height:22px;text-align:center;color:#222">取消</div>
<svg class="ic" style="left:943px;top:451px" width="9" height="8"><g fill="#b5b5b5"><rect x="6" y="0" width="2" height="2"/><rect x="3" y="3" width="2" height="2"/><rect x="6" y="3" width="2" height="2"/><rect x="0" y="6" width="2" height="2"/><rect x="3" y="6" width="2" height="2"/><rect x="6" y="6" width="2" height="2"/></g></svg>

<!-- cursor -->
<svg class="ic" style="left:758px;top:440px" width="13" height="20"><path d="M.5 .5V15.500L4 12.500L6.500 18.500L9 17.500L6.500 11.500H11Z" fill="#fff" stroke="#000" stroke-width="1"/></svg>

<!-- IME bar -->
<div class="a" style="left:1740px;top:942px;width:150px;height:26px;box-sizing:border-box;background:#fff;border:1px solid #c9d8e6;border-bottom:none"></div>
<div class="a" style="left:1717px;top:941px;width:25px;height:25px;background:#f0622c;border-radius:4px;transform:rotate(-15deg);color:#fff;font-weight:700;font-size:24px;line-height:25px;text-align:center;font-family:'Liberation Sans',sans-serif">S</div>
<div class="l" style="left:1750px;top:946px;font-size:15px;line-height:18px;font-weight:700;color:#1a6fc4">中</div>
<div class="l" style="left:1776px;top:944px;font-size:14px;line-height:18px;font-weight:700;color:#1a6fc4">°,</div>
<svg class="ic" style="left:1800px;top:946px" width="13" height="18"><rect x="3.500" y="0" width="6" height="11" rx="3" fill="#1a6fc4"/><path d="M1 8A5.500 5.500 0 0 0 12 8M6.500 14V17M3 17H10" fill="none" stroke="#1a6fc4" stroke-width="1.500"/></svg>
<svg class="ic" style="left:1823px;top:948px" width="15" height="13"><rect width="15" height="13" rx="2" fill="#1a6fc4"/><path d="M2 3.500H13M2 6.500H13M4 10H11" stroke="#fff" stroke-dasharray="1.500 1"/></svg>
<svg class="ic" style="left:1847px;top:948px" width="16" height="14"><path d="M4.500 0L8 1.500L11.500 0L16 3.500L13.500 6.500L12 5.500V14H4V5.500L2.500 6.500L0 3.500Z" fill="#1a6fc4"/></svg>
<svg class="ic" style="left:1872px;top:949px" width="13" height="13"><circle cx="3" cy="3" r="3" fill="#1a6fc4"/><circle cx="10" cy="3" r="3" fill="#1a6fc4"/><circle cx="3" cy="10" r="3" fill="#1a6fc4"/><circle cx="10" cy="10" r="3" fill="#1a6fc4"/></svg>

</body>
</html>
